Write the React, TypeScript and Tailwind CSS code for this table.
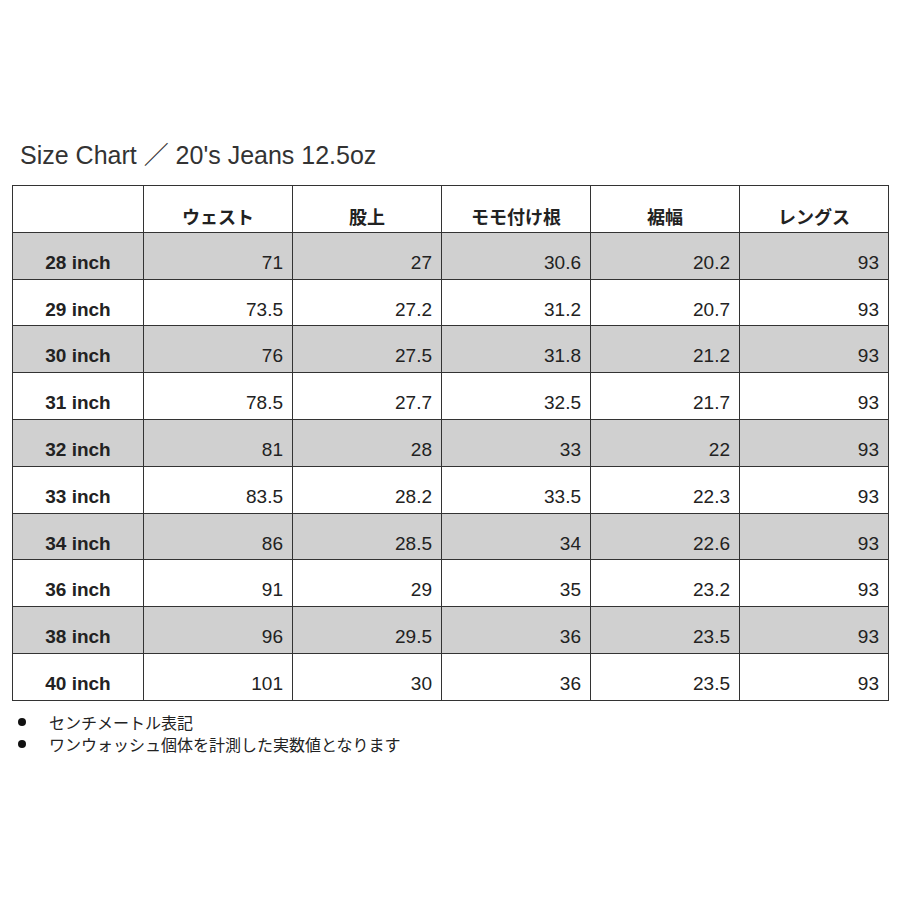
import * as React from "react";

const rows: [string, string, string, string, string, string][] = [
  ["28 inch", "71", "27", "30.6", "20.2", "93"],
  ["29 inch", "73.5", "27.2", "31.2", "20.7", "93"],
  ["30 inch", "76", "27.5", "31.8", "21.2", "93"],
  ["31 inch", "78.5", "27.7", "32.5", "21.7", "93"],
  ["32 inch", "81", "28", "33", "22", "93"],
  ["33 inch", "83.5", "28.2", "33.5", "22.3", "93"],
  ["34 inch", "86", "28.5", "34", "22.6", "93"],
  ["36 inch", "91", "29", "35", "23.2", "93"],
  ["38 inch", "96", "29.5", "36", "23.5", "93"],
  ["40 inch", "101", "30", "36", "23.5", "93"],
];

const headers = ["ウェスト", "股上", "モモ付け根", "裾幅", "レングス"];

const notes = ["センチメートル表記", "ワンウォッシュ個体を計測した実数値となります"];

export default function App() {
  return (
    <div
      className="w-[900px] h-[900px] bg-white text-[#222]"
      style={{ fontFamily: '"Liberation Sans", Arial, "Noto Sans CJK JP", sans-serif' }}
    >
      <div className="pt-[139px] pl-[20px] text-[25px] leading-[32px] text-[#333]">
        Size Chart ／ 20's Jeans 12.5oz
      </div>

      <table className="ml-[12px] mt-[14px] w-[876px] table-fixed border-collapse border-[1.5px] border-[#333]">
        <colgroup>
          <col className="w-[131px]" />
          <col className="w-[149px]" />
          <col className="w-[149px]" />
          <col className="w-[149px]" />
          <col className="w-[149px]" />
          <col className="w-[149px]" />
        </colgroup>
        <thead>
          <tr className="h-[46.8px]">
            <th className="border-[1.5px] border-[#333]" />
            {headers.map((h) => (
              <th
                key={h}
                className="border-[1.5px] border-[#333] align-top pt-[19px] text-center text-[18px] leading-[22px] font-bold"
                style={{ fontFamily: '"Noto Sans CJK JP", sans-serif' }}
              >
                {h}
              </th>
            ))}
          </tr>
        </thead>
        <tbody>
          {rows.map((r, i) => (
            <tr key={r[0]} className={i % 2 === 0 ? "h-[46.8px] bg-[#d0d0d0]" : "h-[46.8px] bg-white"}>
              <td className="border-[1.5px] border-[#333] align-top pt-[19px] text-center text-[19px] leading-[22px] font-bold">
                {r[0]}
              </td>
              {r.slice(1).map((v, j) => (
                <td
                  key={j}
                  className="border-[1.5px] border-[#333] align-top pt-[19px] pr-[9px] text-right text-[19px] leading-[22px]"
                >
                  {v}
                </td>
              ))}
            </tr>
          ))}
        </tbody>
      </table>

      <ul className="mt-[10px] pl-[18px]">
        {notes.map((n) => (
          <li key={n} className="flex items-center h-[22px] text-[16px] text-[#222]">
            <span className="w-[8px] h-[8px] rounded-full bg-[#111] mr-[23px]" />
            <span style={{ fontFamily: '"Noto Sans CJK JP", sans-serif' }}>{n}</span>
          </li>
        ))}
      </ul>
    </div>
  );
}
